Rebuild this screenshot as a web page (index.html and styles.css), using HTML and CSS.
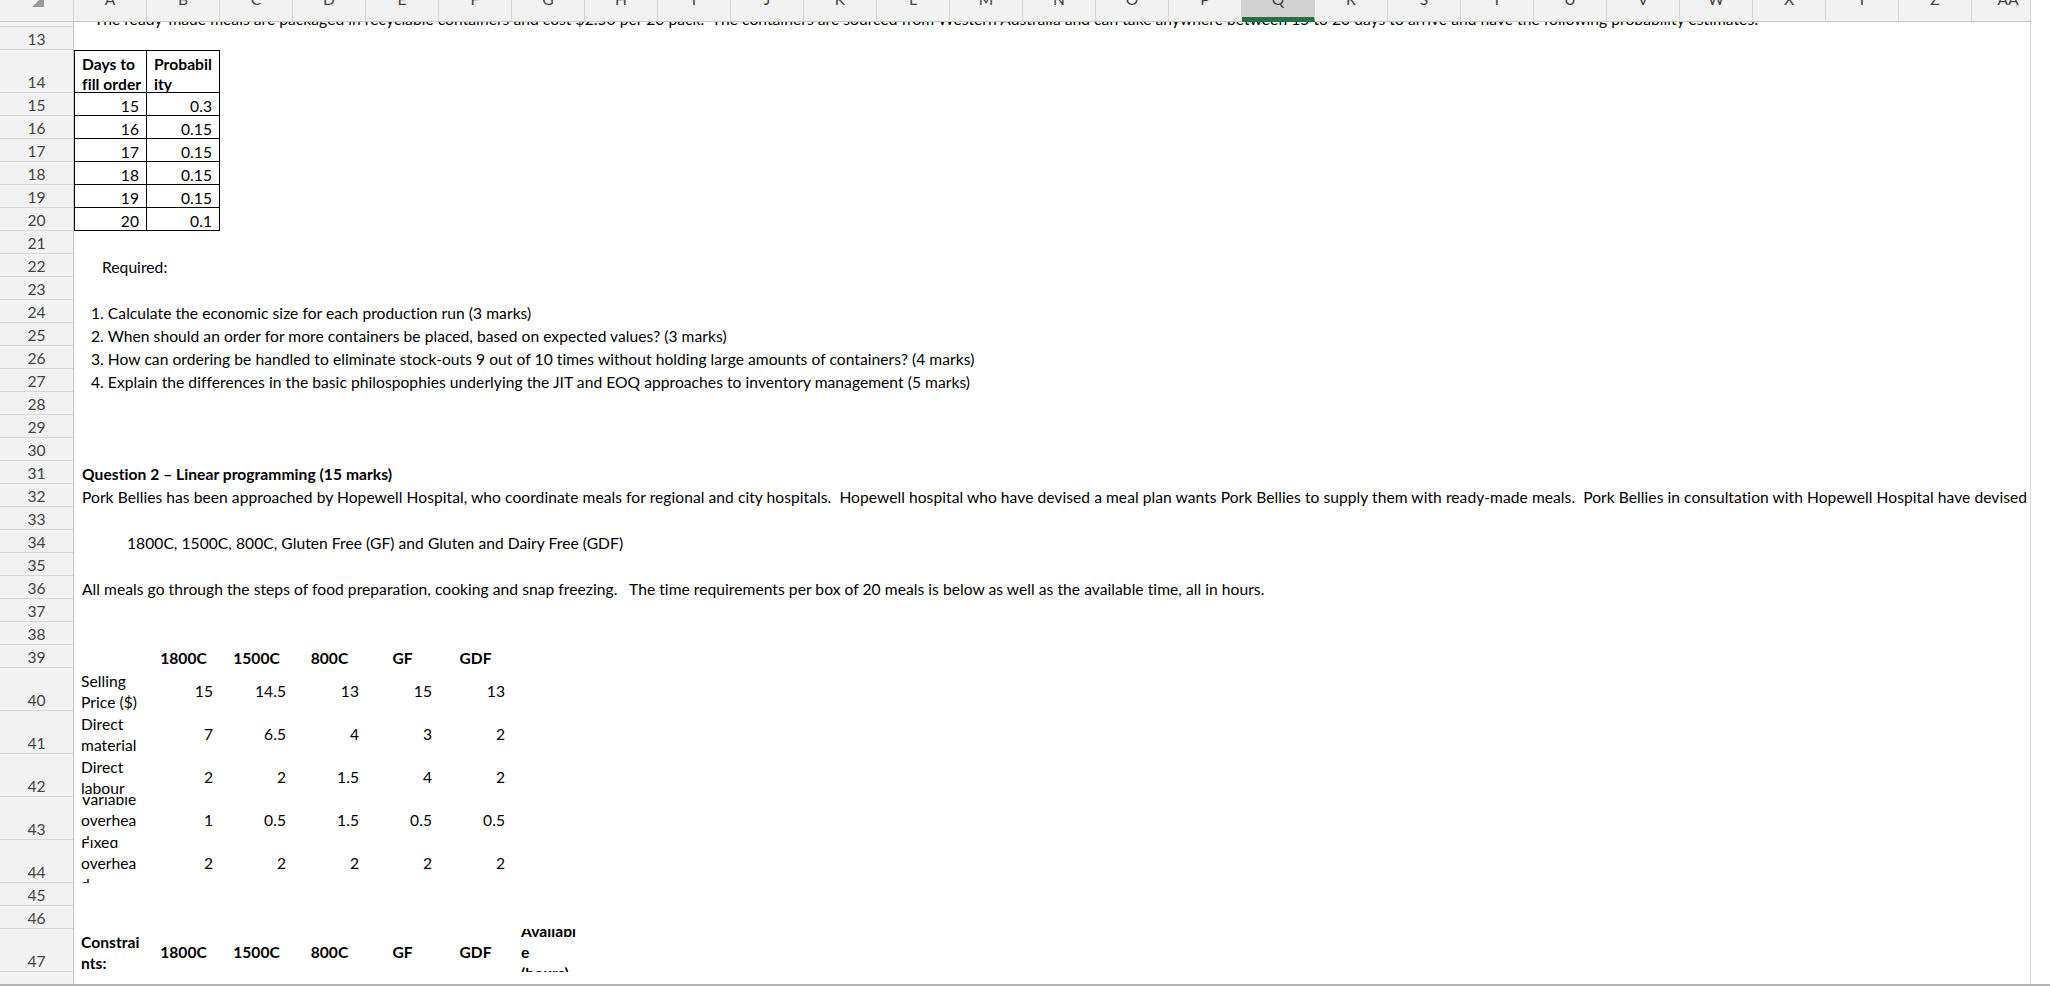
FILE: index.html
```html
<!DOCTYPE html>
<html lang="en">
<head>
    <meta charset="UTF-8">
    <title>Pork Bellies - Sheet1</title>
    <link rel="stylesheet" href="styles.css">
</head>
<body>
    <div class="window">
        <div class="main">
            <!-- column headings, scrolled so only their lower edge shows -->
            <div class="colbar">
                <div class="corner">
                    <svg width="12" height="7" viewBox="0 0 12 7"><polygon points="0,7 12,7 12,-5" fill="#9a9a9a"/></svg>
                </div>
                <div class="colh"><span>A</span></div>
                <div class="colh"><span>B</span></div>
                <div class="colh"><span>C</span></div>
                <div class="colh"><span>D</span></div>
                <div class="colh"><span>E</span></div>
                <div class="colh"><span>F</span></div>
                <div class="colh"><span>G</span></div>
                <div class="colh"><span>H</span></div>
                <div class="colh"><span>I</span></div>
                <div class="colh"><span>J</span></div>
                <div class="colh"><span>K</span></div>
                <div class="colh"><span>L</span></div>
                <div class="colh"><span>M</span></div>
                <div class="colh"><span>N</span></div>
                <div class="colh"><span>O</span></div>
                <div class="colh"><span>P</span></div>
                <div class="colh sel"><span>Q</span></div>
                <div class="colh"><span>R</span></div>
                <div class="colh"><span>S</span></div>
                <div class="colh"><span>T</span></div>
                <div class="colh"><span>U</span></div>
                <div class="colh"><span>V</span></div>
                <div class="colh"><span>W</span></div>
                <div class="colh"><span>X</span></div>
                <div class="colh"><span>Y</span></div>
                <div class="colh"><span>Z</span></div>
                <div class="colh"><span>AA</span></div>
            </div>

            <div class="view">
                <div class="grid">
                    <div class="row"><div class="rh">12</div><div class="c spill lead">The ready-made meals are packaged in recyclable containers and cost $2.50 per 20 pack.&nbsp; The containers are sourced from Western Australia and can take anywhere between 15 to 20 days to arrive and have the following probability estimates:</div></div>
                    <div class="row"><div class="rh">13</div></div>

                    <!-- lead time table -->
                    <div class="row tall"><div class="rh">14</div><div class="c tb tl top b clip">Days to<br>fill order</div><div class="c tb top b clip">Probabil<br>ity</div></div>
                    <div class="row"><div class="rh">15</div><div class="c tb tl num">15</div><div class="c tb num">0.3</div></div>
                    <div class="row"><div class="rh">16</div><div class="c tb tl num">16</div><div class="c tb num">0.15</div></div>
                    <div class="row"><div class="rh">17</div><div class="c tb tl num">17</div><div class="c tb num">0.15</div></div>
                    <div class="row"><div class="rh">18</div><div class="c tb tl num">18</div><div class="c tb num">0.15</div></div>
                    <div class="row"><div class="rh">19</div><div class="c tb tl num">19</div><div class="c tb num">0.15</div></div>
                    <div class="row"><div class="rh">20</div><div class="c tb tl num">20</div><div class="c tb num">0.1</div></div>
                    <div class="row"><div class="rh">21</div></div>

                    <div class="row"><div class="rh">22</div><div class="c spill in28">Required:</div></div>
                    <div class="row"><div class="rh">23</div></div>
                    <div class="row"><div class="rh">24</div><div class="c spill in17">1. Calculate the economic size for each production run (3 marks)</div></div>
                    <div class="row"><div class="rh">25</div><div class="c spill in17">2. When should an order for more containers be placed, based on expected values? (3 marks)</div></div>
                    <div class="row"><div class="rh">26</div><div class="c spill in17">3. How can ordering be handled to eliminate stock-outs 9 out of 10 times without holding large amounts of containers? (4 marks)</div></div>
                    <div class="row"><div class="rh">27</div><div class="c spill in17">4. Explain the differences in the basic philospophies underlying the JIT and EOQ approaches to inventory management (5 marks)</div></div>
                    <div class="row"><div class="rh">28</div></div>
                    <div class="row"><div class="rh">29</div></div>
                    <div class="row"><div class="rh">30</div></div>

                    <div class="row"><div class="rh">31</div><div class="c spill b">Question 2 – Linear programming (15 marks)</div></div>
                    <div class="row"><div class="rh">32</div><div class="c spill">Pork Bellies has been approached by Hopewell Hospital, who coordinate meals for regional and city hospitals.&nbsp; Hopewell hospital who have devised a meal plan wants Pork Bellies to supply them with ready-made meals.&nbsp; Pork Bellies in consultation with Hopewell Hospital have devised a range of five meals:</div></div>
                    <div class="row"><div class="rh">33</div></div>
                    <div class="row"><div class="rh">34</div><div class="c spill in53">1800C, 1500C, 800C, Gluten Free (GF) and Gluten and Dairy Free (GDF)</div></div>
                    <div class="row"><div class="rh">35</div></div>
                    <div class="row"><div class="rh">36</div><div class="c spill">All meals go through the steps of food preparation, cooking and snap freezing.&nbsp;&nbsp; The time requirements per box of 20 meals is below as well as the available time, all in hours.</div></div>
                    <div class="row"><div class="rh">37</div></div>
                    <div class="row"><div class="rh">38</div></div>

                    <!-- meal data -->
                    <div class="row"><div class="rh">39</div><div class="c"></div><div class="c mid b">1800C</div><div class="c mid b">1500C</div><div class="c mid b">800C</div><div class="c mid b">GF</div><div class="c mid b">GDF</div></div>
                    <div class="row tall"><div class="rh">40</div><div class="c clip">Selling<br>Price ($)</div><div class="c num">15</div><div class="c num">14.5</div><div class="c num">13</div><div class="c num">15</div><div class="c num">13</div></div>
                    <div class="row tall"><div class="rh">41</div><div class="c clip">Direct<br>material</div><div class="c num">7</div><div class="c num">6.5</div><div class="c num">4</div><div class="c num">3</div><div class="c num">2</div></div>
                    <div class="row tall"><div class="rh">42</div><div class="c clip">Direct<br>labour</div><div class="c num">2</div><div class="c num">2</div><div class="c num">1.5</div><div class="c num">4</div><div class="c num">2</div></div>
                    <div class="row tall"><div class="rh">43</div><div class="c clip">Variable<br>overhea<br>d</div><div class="c num">1</div><div class="c num">0.5</div><div class="c num">1.5</div><div class="c num">0.5</div><div class="c num">0.5</div></div>
                    <div class="row tall"><div class="rh">44</div><div class="c clip">Fixed<br>overhea<br>d</div><div class="c num">2</div><div class="c num">2</div><div class="c num">2</div><div class="c num">2</div><div class="c num">2</div></div>
                    <div class="row"><div class="rh">45</div></div>
                    <div class="row"><div class="rh">46</div></div>
                    <div class="row tall"><div class="rh">47</div><div class="c clip b">Constrai<br>nts:</div><div class="c mid b">1800C</div><div class="c mid b">1500C</div><div class="c mid b">800C</div><div class="c mid b">GF</div><div class="c mid b">GDF</div><div class="c mid b clip">Availabl<br>e<br>(hours)</div></div>
                    <div class="row"><div class="rh"></div></div>
                </div>
            </div>
        </div>
        <div class="vstrip"></div>
    </div>
</body>
</html>
```

FILE: styles.css
```css
:root {
    --head-bg: #f2f2f2;
    --head-line: #d6d6d6;
    --head-text: #444444;
    --sel-bg: #d2d2d2;
    --sel-green: #217346;
}

body {
    margin: 0;
    background: #ffffff;
    font-family: Lato, "Open Sans", sans-serif;
    font-size: 15.6px;
    letter-spacing: 0.05px;
    color: #000000;
    overflow: hidden;
}

.window {
    display: flex;
    height: 984px;
    border-bottom: 2px solid #b3b3b3;
}

.main {
    width: 2030px;
    flex: none;
    display: flex;
    flex-direction: column;
    overflow: hidden;
}

.vstrip {
    flex: 1;
    border-left: 1px solid #d9d9d9;
}

/* column headings */
.colbar {
    display: flex;
    height: 22px;
    flex: none;
    box-sizing: border-box;
    background: var(--head-bg);
    border-bottom: 1px solid #c6c6c6;
    color: var(--head-text);
}

.corner {
    width: 74px;
    flex: none;
    box-sizing: border-box;
    border-right: 1px solid var(--head-line);
    position: relative;
}

.corner svg {
    position: absolute;
    left: 32px;
    top: 0;
}

.colh {
    width: 73px;
    flex: none;
    box-sizing: border-box;
    border-right: 1px solid var(--head-line);
    text-align: center;
    line-height: 14px;
    overflow: hidden;
}

.colh span {
    display: block;
    margin-top: -8px;
}

.colh.sel {
    background: var(--sel-bg);
    border-bottom: 5px solid var(--sel-green);
    margin-bottom: -1px;
}

/* cell area */
.view {
    flex: 1;
    overflow: hidden;
}

.grid {
    margin-top: -18px;
}

.row {
    display: flex;
    height: 23px;
}

.row.tall {
    height: 43px;
}

.rh {
    width: 74px;
    flex: none;
    box-sizing: border-box;
    background: var(--head-bg);
    border-right: 1px solid #c8c8c8;
    border-bottom: 1px solid var(--head-line);
    color: var(--head-text);
    display: flex;
    align-items: flex-end;
    justify-content: center;
    line-height: 19px;
}

.c {
    width: 73px;
    flex: none;
    box-sizing: border-box;
    display: flex;
    align-items: center;
    padding: 4px 7px 0;
    white-space: nowrap;
    line-height: 21px;
}

.c.spill { width: auto; padding-left: 8px; }
.c.lead { padding-left: 20px; padding-top: 8px; }
.c.in17 { padding-left: 17px; }
.c.in28 { padding-left: 28px; }
.c.in53 { padding-left: 53px; }

.c.num { justify-content: flex-end; }
.c.mid { justify-content: center; }
.c.clip { overflow: hidden; }
.b { font-weight: 700; }

/* bordered table */
.c.tb {
    border-right: 1px solid #000000;
    border-bottom: 1px solid #000000;
}

.c.tl { border-left: 1px solid #000000; }
.c.top { border-top: 1px solid #000000; line-height: 20px; }
```
